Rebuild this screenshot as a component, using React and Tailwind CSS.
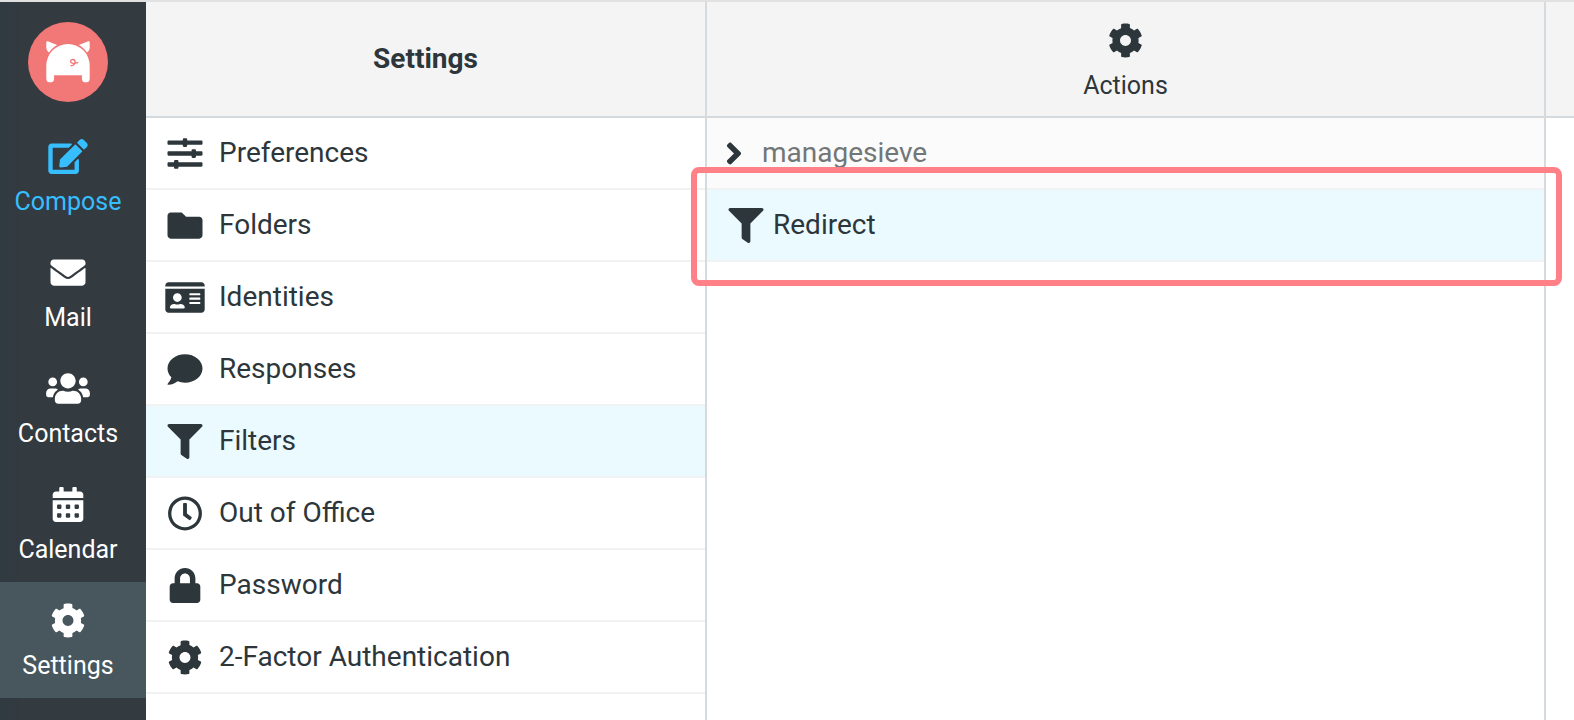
import {
  FaAngleRight,
  FaCalendarAlt,
  FaCog,
  FaComment,
  FaEdit,
  FaEnvelope,
  FaFilter,
  FaFolder,
  FaIdCard,
  FaLock,
  FaRegClock,
  FaSlidersH,
  FaUsers,
} from "react-icons/fa";

const tasks = [
  { label: "Compose", icon: FaEdit, style: "text-[#37beff]" },
  { label: "Mail", icon: FaEnvelope, style: "text-white" },
  { label: "Contacts", icon: FaUsers, style: "text-white" },
  { label: "Calendar", icon: FaCalendarAlt, style: "text-white" },
  { label: "Settings", icon: FaCog, style: "bg-[#47575d] text-white", current: true },
];

const sections = [
  { label: "Preferences", icon: FaSlidersH },
  { label: "Folders", icon: FaFolder },
  { label: "Identities", icon: FaIdCard },
  { label: "Responses", icon: FaComment },
  { label: "Filters", icon: FaFilter, current: true },
  { label: "Out of Office", icon: FaRegClock },
  { label: "Password", icon: FaLock },
  { label: "2-Factor Authentication", icon: FaCog },
];

function Logo() {
  return (
    <svg viewBox="0 0 80 80" className="size-20" role="img" aria-label="Home">
      <circle cx="40" cy="40" r="40" fill="#f27777" />
      <g fill="#fff">
        <path d="M18.3 43.7a21.7 21.7 0 0 1 43.4 0V56.4a3.9 3.9 0 0 1-7.8 0V53.3H26.1v3.1a3.9 3.9 0 0 1-7.8 0z" />
        <path d="M18.3 20.6c0-1.2 1-1.6 2-1.2l9 3.6c-3.6 1.9-6.2 4.5-8.2 7.6-1.8-1.4-2.8-3-2.8-5z" />
        <path d="M61.7 20.6c0-1.2-1-1.6-2-1.2l-9 3.6c3.600 1.900 6.200 4.500 8.200 7.600 1.800-1.400 2.800-3 2.800-5z" />
      </g>
      <path
        d="M42.800 43.600c2.500.4 4.300-1.300 4.300-3.800 0-3-4.500-3-4.500-.4 0 2 3.500 2.600 7.200 1.200"
        fill="none"
        stroke="#f27777"
        strokeWidth="1.300"
        strokeLinecap="round"
      />
    </svg>
  );
}

function Taskbar() {
  return (
    <nav
      aria-label="Tasks"
      className="bg-linear-to-r from-[#2f3b40] to-[#333a40] to-15% pt-5 text-[25px] leading-8"
    >
      <a href="#home" className="mb-4 flex justify-center pr-[10px]">
        <Logo />
      </a>
      {tasks.map(({ label, icon: Icon, style, current }) => (
        <a
          key={label}
          href={`#${label.toLowerCase()}`}
          aria-current={current ? "page" : undefined}
          className={`flex h-[116px] flex-col items-center justify-center gap-3 pt-[5px] pr-[10px] ${style}`}
        >
          <Icon className="h-[35px] w-11" />
          {label}
        </a>
      ))}
    </nav>
  );
}

export default function App() {
  return (
    <div className="grid min-h-screen grid-cols-[146px_561fr_839fr_28px] border-t-2 border-[#e2e1e2] bg-white font-[Roboto,sans-serif] text-[28px] leading-9 text-[#2c363b]">
      <Taskbar />

      <section className="min-w-0 border-r-2 border-[#d4dade]">
        <header className="flex h-[116px] items-center justify-center border-b-2 border-[#d4dade] bg-[#f4f4f4]">
          <h1 className="font-bold">Settings</h1>
        </header>
        <ul>
          {sections.map(({ label, icon: Icon, current }) => (
            <li key={label} className="border-b-2 border-[#f1f2f3]">
              <a
                href={`#${label.toLowerCase().replaceAll(" ", "-")}`}
                aria-current={current ? "true" : undefined}
                className={`flex h-[70px] items-center gap-[14px] px-[19px] ${current ? "bg-[#eafaff]" : ""}`}
              >
                <Icon className="h-[35px] w-10" />
                {label}
              </a>
            </li>
          ))}
        </ul>
      </section>

      <section className="min-w-0 border-r-2 border-[#d4dade]">
        <header className="flex h-[116px] items-center justify-center border-b-2 border-[#d4dade] bg-[#f4f4f4]">
          <button type="button" className="flex flex-col items-center gap-3 pt-[7px] text-[25px] leading-8">
            <FaCog className="size-[35px]" />
            Actions
          </button>
        </header>
        <button
          type="button"
          aria-expanded="false"
          className="flex h-[72px] w-full items-center gap-4 border-b-2 border-[#f1f2f3] bg-[#fbfbfb] px-[15px] text-[#737677]"
        >
          <FaAngleRight className="h-[35px] w-6 text-[#2c363b]" />
          managesieve
        </button>
        <div className="relative border-b-2 border-[#f1f2f3]">
          <a href="#redirect" aria-current="true" className="flex h-[70px] items-center gap-[7px] bg-[#eafaff] px-[19px]">
            <FaFilter className="h-[35px] w-10" />
            Redirect
          </a>
          <div className="pointer-events-none absolute -top-[23px] -right-[18px] -bottom-[26px] -left-4 rounded-lg border-6 border-[#ff8086]" />
        </div>
      </section>

      <div>
        <div className="h-[116px] border-b-2 border-[#d4dade] bg-[#f4f4f4]" />
      </div>
    </div>
  );
}
